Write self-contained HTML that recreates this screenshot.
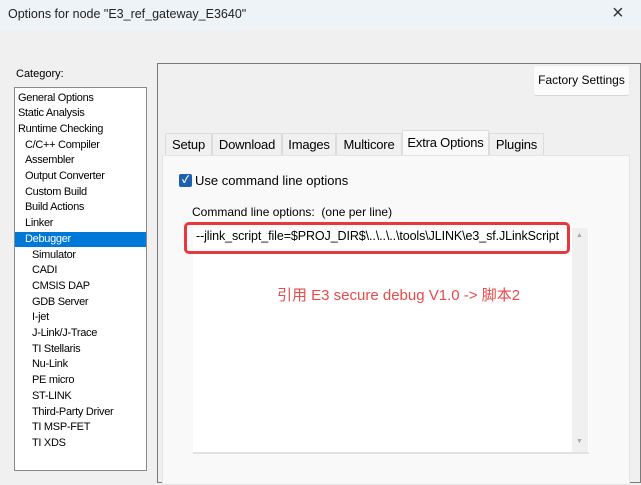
<!DOCTYPE html>
<html><head><meta charset="utf-8"><style>
*{margin:0;padding:0;box-sizing:border-box}
body{width:641px;height:479px;overflow:hidden;background:#f0f0f0;font-family:"Liberation Sans","Noto Sans CJK SC",sans-serif;position:relative;color:#000}
.a{position:absolute;white-space:nowrap}
.title{left:0;top:0;width:641px;height:30px;background:#eef3f7}
.lst{left:14px;top:87px;width:133px;height:384px;background:#fff;border:1px solid #8a8a8a}
.it{position:absolute;left:3px;font-size:11px;letter-spacing:-0.3px;height:15.7px;line-height:15.7px}
.tab{position:absolute;top:133px;height:22px;font-size:13px;line-height:22px;text-align:center;background:#f0f0f0;border:1px solid #dcdcdc;border-bottom:none;letter-spacing:-0.2px}
</style></head><body>
<div class="a title"></div>
<div class="a" style="left:8px;top:7px;font-size:12.5px;color:#222">Options for node "E3_ref_gateway_E3640"</div>
<div class="a" style="left:612px;top:2px;font-size:20px;color:#333">×</div>
<div class="a" style="left:16px;top:68px;font-size:11px">Category:</div>
<div class="a lst">
<div class="it" style="top:2.5px">General Options</div>
<div class="it" style="top:18.2px">Static Analysis</div>
<div class="it" style="top:33.9px">Runtime Checking</div>
<div class="it" style="top:49.6px;left:10px">C/C++ Compiler</div>
<div class="it" style="top:65.3px;left:10px">Assembler</div>
<div class="it" style="top:81px;left:10px">Output Converter</div>
<div class="it" style="top:96.7px;left:10px">Custom Build</div>
<div class="it" style="top:112.4px;left:10px">Build Actions</div>
<div class="it" style="top:128.1px;left:10px">Linker</div>
<div class="it" style="top:143.8px;left:0;width:131px;padding-left:10px;background:#0078d7;color:#fff">Debugger</div>
<div class="it" style="top:159.5px;left:17px">Simulator</div>
<div class="it" style="top:175.2px;left:17px">CADI</div>
<div class="it" style="top:190.9px;left:17px">CMSIS DAP</div>
<div class="it" style="top:206.6px;left:17px">GDB Server</div>
<div class="it" style="top:222.3px;left:17px">I-jet</div>
<div class="it" style="top:238px;left:17px">J-Link/J-Trace</div>
<div class="it" style="top:253.7px;left:17px">TI Stellaris</div>
<div class="it" style="top:269.4px;left:17px">Nu-Link</div>
<div class="it" style="top:285.1px;left:17px">PE micro</div>
<div class="it" style="top:300.8px;left:17px">ST-LINK</div>
<div class="it" style="top:316.5px;left:17px">Third-Party Driver</div>
<div class="it" style="top:332.2px;left:17px">TI MSP-FET</div>
<div class="it" style="top:347.9px;left:17px">TI XDS</div>
</div>
<div class="a" style="left:157px;top:63px;width:484px;height:420px;border:1px solid #7a7a7a;background:#f0f0f0"></div>
<div class="a" style="left:533px;top:65px;width:97px;height:31px;background:#fbfbfb;border:1px solid #ececec;border-bottom-color:#d6d6d6;border-radius:3px;font-size:12px;line-height:29px;text-align:center">Factory Settings</div>
<div class="tab" style="left:165px;width:47px">Setup</div>
<div class="tab" style="left:212px;width:70px">Download</div>
<div class="tab" style="left:282px;width:54px">Images</div>
<div class="tab" style="left:336px;width:66px">Multicore</div>
<div class="tab" style="left:402px;width:87px;top:130px;height:26px;background:#f9f9f9;line-height:24px">Extra Options</div>
<div class="tab" style="left:489px;width:55px">Plugins</div>
<div class="a" style="left:162px;top:155px;width:468px;height:330px;background:#f9f9f9;border:1px solid #e4e4e4"></div>
<div class="a" style="left:179px;top:174px;width:13px;height:13px;background:#1d5fb0;border-radius:2px;color:#fff;font-size:10px;font-weight:bold;line-height:13px;text-align:center">✓</div>
<div class="a" style="left:195px;top:173px;font-size:13px">Use command line options</div>
<div class="a" style="left:192px;top:205px;font-size:12px">Command line options:&nbsp; (one per line)</div>
<div class="a" style="left:193px;top:228px;width:396px;height:226px;background:#fff;border-bottom:2px solid #e2e2e2"></div>
<div class="a" style="left:572px;top:228px;width:16px;height:224px;background:#f0f0f0"></div>
<div class="a" style="left:576px;top:232px;font-size:7px;color:#aaa">▲</div>
<div class="a" style="left:576px;top:438px;font-size:7px;color:#aaa">▼</div>
<div class="a" style="left:184px;top:222px;width:386px;height:32px;border:3px solid #e8383d;border-radius:5px"></div>
<div class="a" style="left:196px;top:229px;font-size:12.5px;letter-spacing:-0.1px">--jlink_script_file=$PROJ_DIR$\..\..\..\tools\JLINK\e3_sf.JLinkScript</div>
<div class="a" style="left:277px;top:284px;font-size:15px;color:#e84a4a">引用 E3 secure debug V1.0 -&gt; 脚本2</div>
</body></html>
